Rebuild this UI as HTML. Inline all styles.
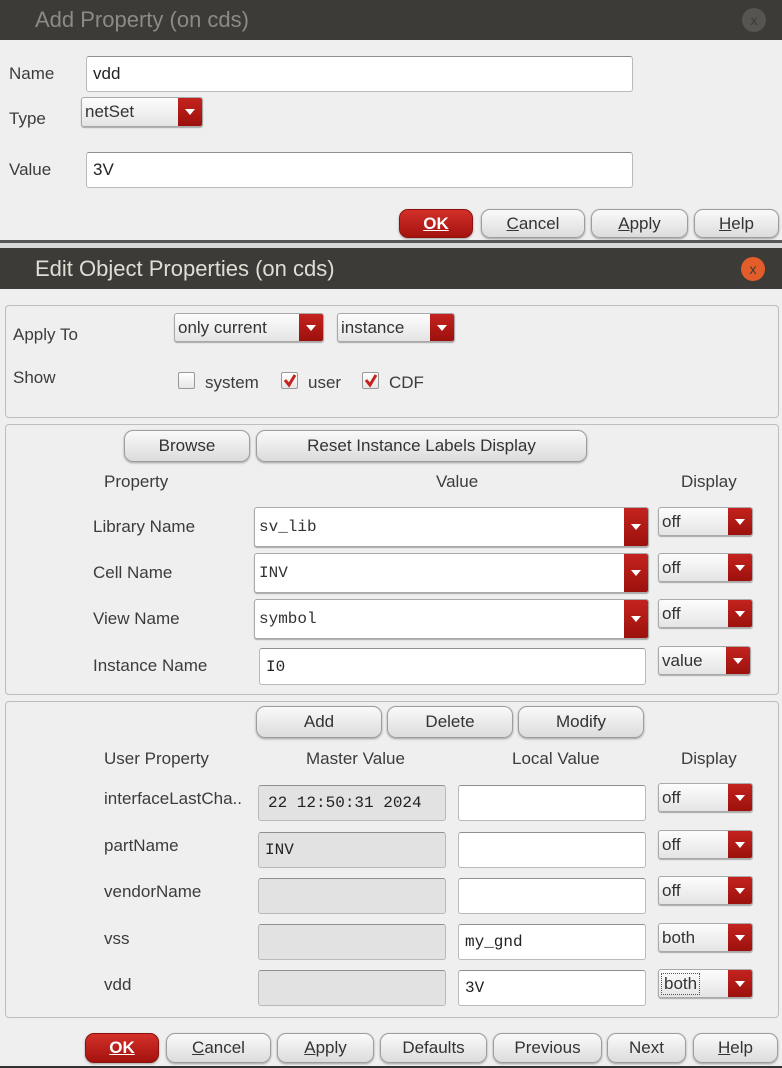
<!DOCTYPE html>
<html><head><meta charset="utf-8"><style>
*{box-sizing:border-box;margin:0;padding:0}
body{width:782px;height:1068px;position:relative;background:#efefef;font-family:"Liberation Sans",sans-serif;font-size:17px;color:#3c3c3c;overflow:hidden}
.a{position:absolute}
.tb{position:absolute;left:0;width:782px;background:#3c3b37}
.lbl{position:absolute;line-height:20px;white-space:nowrap}
.in{position:absolute;background:#fff;border:1px solid #b9b9b9;border-top-color:#8f8f8f;border-radius:3px;padding-left:6px;display:flex;align-items:center;font-family:"Liberation Mono",monospace;font-size:16px;color:#222}
.in.s{font-family:"Liberation Sans",sans-serif;font-size:17px}
.in.g{background:#e2e2e2}
.btn{position:absolute;border:1px solid #9d9d9d;border-radius:9px;background:linear-gradient(#fafafa,#dcdcdc);box-shadow:0 1px 2px rgba(0,0,0,.35);display:flex;align-items:center;justify-content:center;font-size:17px;color:#333}
.btn.ok{background:linear-gradient(#d4302a,#a4120e);border-color:#8d110c;color:#fff;font-weight:bold}
.u{text-decoration:underline}
.cb{position:absolute;border:1px solid #a9a9a9;border-radius:3px;background:linear-gradient(#fdfdfd,#e4e4e4);box-shadow:0 1px 1px rgba(0,0,0,.3);display:flex;align-items:center;padding-left:3px;overflow:hidden;color:#333;font-size:17px}
.cb .ar{position:absolute;right:0;top:0;bottom:0;width:24px;background:linear-gradient(#c4231e,#9c110d)}
.cb .ar:after{content:"";position:absolute;left:7px;top:50%;margin-top:-3px;border-left:5px solid transparent;border-right:5px solid transparent;border-top:6px solid #fff}
.cb.m{background:#fff;font-family:"Liberation Mono",monospace;font-size:16px;padding-left:4px}
.grp{position:absolute;left:5px;width:774px;border:1px solid #bdbdbd;border-radius:4px}
.ck{position:absolute;width:17px;height:17px;border:1px solid #999;border-radius:2px;background:linear-gradient(#fff,#e6e6e6)}
.ck svg{position:absolute;left:1px;top:1px}
</style></head><body>
<div class="tb" style="top:0;height:40px"></div>
<div class="lbl" style="left:35px;top:8px;font-size:22px;line-height:24px;color:#8b8a85">Add Property (on cds)</div>
<div class="a" style="left:742px;top:8px;width:24px;height:24px;border-radius:12px;background:#56554f;color:#3c3b37;font-size:14px;text-align:center;line-height:24px">x</div>

<div class="lbl" style="left:9px;top:64px">Name</div>
<div class="in s" style="left:86px;top:56px;width:547px;height:36px">vdd</div>
<div class="lbl" style="left:9px;top:109px">Type</div>
<div class="cb" style="left:81px;top:97px;width:122px;height:30px">netSet<div class="ar"></div></div>
<div class="lbl" style="left:9px;top:160px">Value</div>
<div class="in s" style="left:86px;top:152px;width:547px;height:36px">3V</div>
<div class="btn ok" style="left:399px;top:209px;width:74px;height:29px"><span class="u">OK</span></div>
<div class="btn" style="left:481px;top:209px;width:104px;height:29px"><span><span class="u">C</span>ancel</span></div>
<div class="btn" style="left:591px;top:209px;width:97px;height:29px"><span><span class="u">A</span>pply</span></div>
<div class="btn" style="left:694px;top:209px;width:85px;height:29px"><span><span class="u">H</span>elp</span></div>

<div class="a" style="left:0;top:240px;width:782px;height:3px;background:#555"></div>
<div class="a" style="left:0;top:243px;width:782px;height:5px;background:#d8d8d8"></div>
<div class="tb" style="top:248px;height:41px"></div>
<div class="lbl" style="left:35px;top:257px;font-size:22px;line-height:24px;color:#e0ddd5">Edit Object Properties (on cds)</div>
<div class="a" style="left:741px;top:257px;width:24px;height:24px;border-radius:12px;background:#e35d2a;color:#3c3b37;font-size:14px;text-align:center;line-height:24px">x</div>

<div class="grp" style="top:305px;height:113px"></div>
<div class="lbl" style="left:13px;top:325px">Apply To</div>
<div class="cb" style="left:174px;top:313px;width:150px;height:29px">only current<div class="ar"></div></div>
<div class="cb" style="left:337px;top:313px;width:118px;height:29px">instance<div class="ar"></div></div>
<div class="lbl" style="left:13px;top:368px">Show</div>
<div class="ck" style="left:178px;top:372px"></div>
<div class="lbl" style="left:205px;top:373px">system</div>
<div class="ck" style="left:281px;top:372px"><svg width="14" height="14"><path d="M2 6 L6 11 L12 1" stroke="#c4231e" stroke-width="3" fill="none"/></svg></div>
<div class="lbl" style="left:308px;top:373px">user</div>
<div class="ck" style="left:362px;top:372px"><svg width="14" height="14"><path d="M2 6 L6 11 L12 1" stroke="#c4231e" stroke-width="3" fill="none"/></svg></div>
<div class="lbl" style="left:389px;top:373px">CDF</div>

<div class="grp" style="top:424px;height:271px"></div>
<div class="btn" style="left:124px;top:430px;width:126px;height:32px">Browse</div>
<div class="btn" style="left:256px;top:430px;width:331px;height:32px">Reset Instance Labels Display</div>
<div class="lbl" style="left:104px;top:472px">Property</div>
<div class="lbl" style="left:436px;top:472px">Value</div>
<div class="lbl" style="left:681px;top:472px">Display</div>

<div class="lbl" style="left:93px;top:517px">Library Name</div>
<div class="cb m" style="left:254px;top:507px;width:395px;height:40px">sv_lib<div class="ar"></div></div>
<div class="cb" style="left:658px;top:507px;width:95px;height:29px">off<div class="ar"></div></div>
<div class="lbl" style="left:93px;top:563px">Cell Name</div>
<div class="cb m" style="left:254px;top:553px;width:395px;height:40px">INV<div class="ar"></div></div>
<div class="cb" style="left:658px;top:553px;width:95px;height:29px">off<div class="ar"></div></div>
<div class="lbl" style="left:93px;top:609px">View Name</div>
<div class="cb m" style="left:254px;top:599px;width:395px;height:40px">symbol<div class="ar"></div></div>
<div class="cb" style="left:658px;top:599px;width:95px;height:29px">off<div class="ar"></div></div>
<div class="lbl" style="left:93px;top:656px">Instance Name</div>
<div class="in" style="left:259px;top:648px;width:387px;height:37px">I0</div>
<div class="cb" style="left:658px;top:646px;width:93px;height:29px">value<div class="ar"></div></div>

<div class="grp" style="top:701px;height:317px"></div>
<div class="btn" style="left:256px;top:706px;width:126px;height:32px">Add</div>
<div class="btn" style="left:387px;top:706px;width:126px;height:32px">Delete</div>
<div class="btn" style="left:518px;top:706px;width:126px;height:32px">Modify</div>
<div class="lbl" style="left:104px;top:749px">User Property</div>
<div class="lbl" style="left:306px;top:749px">Master Value</div>
<div class="lbl" style="left:512px;top:749px">Local Value</div>
<div class="lbl" style="left:681px;top:749px">Display</div>

<div class="lbl" style="left:104px;top:789px">interfaceLastCha..</div>
<div class="in g" style="left:258px;top:785px;width:188px;height:36px;padding-left:9px">22 12:50:31 2024</div>
<div class="in" style="left:458px;top:785px;width:188px;height:36px"></div>
<div class="cb" style="left:658px;top:783px;width:95px;height:29px">off<div class="ar"></div></div>

<div class="lbl" style="left:104px;top:836px">partName</div>
<div class="in g" style="left:258px;top:832px;width:188px;height:36px">INV</div>
<div class="in" style="left:458px;top:832px;width:188px;height:36px"></div>
<div class="cb" style="left:658px;top:830px;width:95px;height:29px">off<div class="ar"></div></div>

<div class="lbl" style="left:104px;top:882px">vendorName</div>
<div class="in g" style="left:258px;top:878px;width:188px;height:36px"></div>
<div class="in" style="left:458px;top:878px;width:188px;height:36px"></div>
<div class="cb" style="left:658px;top:876px;width:95px;height:29px">off<div class="ar"></div></div>

<div class="lbl" style="left:104px;top:929px">vss</div>
<div class="in g" style="left:258px;top:924px;width:188px;height:36px"></div>
<div class="in" style="left:458px;top:924px;width:188px;height:36px">my_gnd</div>
<div class="cb" style="left:658px;top:923px;width:95px;height:29px">both<div class="ar"></div></div>

<div class="lbl" style="left:104px;top:975px">vdd</div>
<div class="in g" style="left:258px;top:970px;width:188px;height:36px"></div>
<div class="in" style="left:458px;top:970px;width:188px;height:36px">3V</div>
<div class="cb" style="left:658px;top:969px;width:95px;height:29px"><span style="outline:1px dotted #555;padding:0 2px">both</span><div class="ar"></div></div>

<div class="btn ok" style="left:85px;top:1033px;width:74px;height:30px"><span class="u">OK</span></div>
<div class="btn" style="left:166px;top:1033px;width:105px;height:30px"><span><span class="u">C</span>ancel</span></div>
<div class="btn" style="left:277px;top:1033px;width:97px;height:30px"><span><span class="u">A</span>pply</span></div>
<div class="btn" style="left:380px;top:1033px;width:107px;height:30px">Defaults</div>
<div class="btn" style="left:493px;top:1033px;width:109px;height:30px">Previous</div>
<div class="btn" style="left:607px;top:1033px;width:79px;height:30px">Next</div>
<div class="btn" style="left:693px;top:1033px;width:85px;height:30px"><span><span class="u">H</span>elp</span></div>
<div class="a" style="left:0;top:1066px;width:782px;height:2px;background:#333"></div>
</body></html>
